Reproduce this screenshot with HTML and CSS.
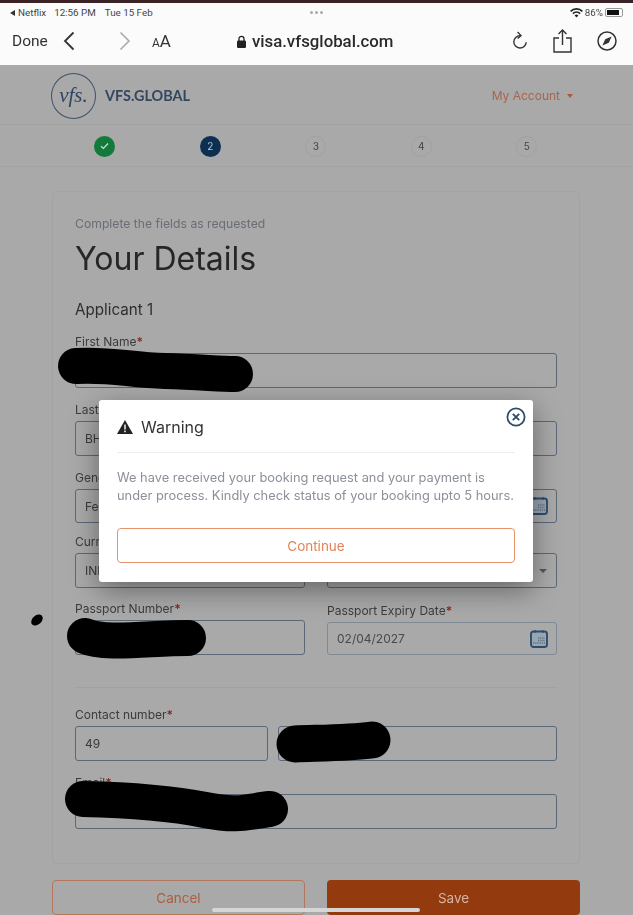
FILE: index.html
```html
<!DOCTYPE html>
<html lang="en">
<head>
  <meta charset="UTF-8">
  <meta name="viewport" content="width=device-width, initial-scale=1.0">
  <title>Your Details</title>
  <link rel="stylesheet" href="styles.css">
</head>
<body>
  <div class="screen">

    <!-- Browser chrome -->
    <div class="browser">
      <div class="status-bar">
        <div class="status-left">
          <span class="back-tri"></span><span>Netflix</span><span class="status-time">12:56 PM</span><span class="status-date">Tue 15 Feb</span>
        </div>
        <div class="status-dots"><i></i><i></i><i></i></div>
        <div class="status-right">
          <svg width="13" height="10" viewBox="0 0 13 10"><path d="M6.5 9.5 4.6 7.4a2.8 2.8 0 0 1 3.8 0zM3.5 6.2 2.3 5a6 6 0 0 1 8.4 0L9.5 6.2a4.4 4.4 0 0 0-6 0zM1.2 3.9 0 2.7a9.2 9.2 0 0 1 13 0l-1.2 1.2a7.6 7.6 0 0 0-10.6 0z" fill="#222"/></svg>
          <span>86%</span>
          <span class="battery"><span class="battery-fill"></span></span>
        </div>
      </div>
      <div class="nav-bar">
        <span class="done">Done</span>
        <svg class="chev" width="12" height="20" viewBox="0 0 12 20"><path d="M10.5 1.5 2 10l8.5 8.5" fill="none" stroke="#333" stroke-width="1.8"/></svg>
        <svg class="chev chev-next" width="12" height="20" viewBox="0 0 12 20"><path d="M1.5 1.5 10 10l-8.5 8.5" fill="none" stroke="#aaa" stroke-width="1.6"/></svg>
        <span class="text-size"><small>A</small>A</span>
        <div class="url">
          <svg width="9" height="13" viewBox="0 0 9 13"><path d="M2 6V3.8a2.5 2.5 0 0 1 5 0V6" fill="none" stroke="#222" stroke-width="1.3"/><rect x="0" y="5.5" width="9" height="7.5" rx="1.2" fill="#222"/></svg>
          <span>visa.vfsglobal.com</span>
        </div>
        <div class="nav-icons">
          <svg width="16" height="20" viewBox="0 0 16 20"><path d="M8 4.6a6.2 6.2 0 1 0 6.2 6.6" fill="none" stroke="#333" stroke-width="1.4"/><path d="M5.6 1 9 4.6 5.6 7.6" fill="none" stroke="#333" stroke-width="1.4"/></svg>
          <svg width="19" height="24" viewBox="0 0 19 24"><path d="M6 9H1v14h17V9h-5" fill="none" stroke="#333" stroke-width="1.4"/><path d="M9.5 16V1.5M5.5 5l4-4 4 4" fill="none" stroke="#333" stroke-width="1.4"/></svg>
          <svg width="20" height="20" viewBox="0 0 20 20"><circle cx="10" cy="10" r="9" fill="none" stroke="#333" stroke-width="1.5"/><path d="M14.6 5.4 11.8 11.8 5.4 14.6 8.2 8.2z" fill="#333"/></svg>
        </div>
      </div>
    </div>

    <!-- Page under the dialog -->
    <div class="page">
      <header class="site-header">
        <div class="logo">
          <span class="logo-mark">vfs.</span>
          <span class="logo-name">VFS.GLOBAL</span>
        </div>
        <div class="account">My Account <span class="caret"></span></div>
      </header>

      <div class="steps">
        <div class="step step-done">
          <svg width="9" height="8" viewBox="0 0 9 8"><path d="M1 4.2 3.4 6.5 8 1.5" fill="none" stroke="#cfe0d4" stroke-width="1.2"/></svg>
        </div>
        <div class="step step-current">2</div>
        <div class="step">3</div>
        <div class="step">4</div>
        <div class="step">5</div>
      </div>

      <main class="card">
        <p class="card-sub">Complete the fields as requested</p>
        <h1 class="card-title">Your Details</h1>
        <h2 class="applicant">Applicant 1</h2>

        <div class="form-row">
          <div class="field">
            <label>First Name<b>*</b></label>
            <div class="input"></div>
          </div>
        </div>
        <div class="form-row">
          <div class="field">
            <label>Last Name<b>*</b></label>
            <div class="input">BH</div>
          </div>
        </div>
        <div class="form-row cols row-gender">
          <div class="field">
            <label>Gender<b>*</b></label>
            <div class="input input-short">Fe</div>
          </div>
          <div class="field">
            <label></label>
            <div class="input input-short">
              <svg class="cal" width="18" height="18" viewBox="0 0 18 18"><use href="#calendar"/></svg>
            </div>
          </div>
        </div>
        <div class="form-row cols row-current">
          <div class="field">
            <label>Current<b>*</b></label>
            <div class="input">IND</div>
          </div>
          <div class="field">
            <label></label>
            <div class="input"><span class="select-caret"></span></div>
          </div>
        </div>
        <div class="form-row cols row-passport">
          <div class="field">
            <label>Passport Number<b>*</b></label>
            <div class="input"></div>
          </div>
          <div class="field field-low">
            <label>Passport Expiry Date<b>*</b></label>
            <div class="input input-light">02/04/2027
              <svg class="cal" width="18" height="18" viewBox="0 0 18 18"><use href="#calendar"/></svg>
            </div>
          </div>
        </div>

        <hr class="divider">

        <div class="form-row phone">
          <div class="field">
            <label>Contact number<b>*</b></label>
            <div class="input">49</div>
          </div>
          <div class="field">
            <label></label>
            <div class="input"></div>
          </div>
        </div>
        <div class="form-row">
          <div class="field">
            <label>Email<b>*</b></label>
            <div class="input"></div>
          </div>
        </div>
      </main>

      <div class="actions">
        <button class="btn btn-outline">Cancel</button>
        <button class="btn btn-fill">Save</button>
      </div>
    </div>

    <!-- Marker scribbles over the screenshot -->
    <svg class="scribbles" width="633" height="915" viewBox="0 0 633 915">
      <g fill="none" stroke="#000" stroke-linecap="round">
        <path stroke-width="36" d="M76 366C110 364 130 370 165 371S220 374 235 374"/>
        <path stroke-width="36" d="M85 636C105 645 150 638 188 638"/>
        <path stroke-width="37" d="M295 744C320 743 350 743 372 740"/>
        <path stroke-width="36" d="M83 799C130 800 170 803 205 810S250 811 270 809"/>
      </g>
      <ellipse cx="37" cy="620" rx="6.5" ry="4.5" transform="rotate(-40 37 620)" fill="#000"/>
    </svg>

    <div class="home-bar"></div>

    <!-- Warning dialog -->
    <div class="dialog">
      <svg class="dialog-close" width="20" height="20" viewBox="0 0 20 20"><circle cx="10" cy="10" r="8.6" fill="none" stroke="#2f4d6b" stroke-width="1.8"/><path d="M6.8 6.8l6.4 6.4M13.2 6.8l-6.4 6.4" stroke="#2f4d6b" stroke-width="1.9"/></svg>
      <div class="dialog-head">
        <svg width="16" height="14" viewBox="0 0 16 14"><path d="M8 0 16 14H0z" fill="#222"/><path d="M8 4.5v5M8 10.6v1.6" stroke="#fff" stroke-width="1.4"/></svg>
        <span>Warning</span>
      </div>
      <p class="dialog-text">We have received your booking request and your payment is under process. Kindly check status of your booking upto 5 hours.</p>
      <button class="btn btn-continue">Continue</button>
    </div>

    <svg width="0" height="0" class="defs">
      <symbol id="calendar" viewBox="0 0 18 18">
        <rect x="1" y="1.5" width="16" height="15.5" rx="2.5" fill="#98a5b2" stroke="#2f4d6b" stroke-width="1.9"/>
        <path d="M5 0v3M13 0v3" stroke="#2f4d6b" stroke-width="1.2"/>
        <path d="M8 8h7M8 10.5h7M3 13h12" stroke="#5e7083" stroke-width="1.3" stroke-dasharray="1.2 1"/>
      </symbol>
    </svg>
  </div>
</body>
</html>
```

FILE: styles.css
```css
/* Global */
html, body {
  margin: 0;
  padding: 0;
  height: 100%;
  overflow: hidden;
  background: #a9a9a9;
}

body {
  font-family: 'Inter', sans-serif;
  color: #333;
}

.screen {
  position: relative;
  width: 633px;
  height: 915px;
  overflow: hidden;
  filter: blur(0.35px);
}

.defs {
  position: absolute;
}

/* Browser chrome */
.browser {
  height: 62px;
  border-top: 3px solid #3a2226;
  background: #fbfbfb;
  font-family: 'Roboto', sans-serif;
}

.status-bar {
  display: grid;
  grid-template-columns: 1fr 30px 1fr;
  align-items: center;
  height: 19px;
  padding: 0 10px;
  font-size: 9.8px;
  color: #444;
}

.status-left {
  display: flex;
  align-items: center;
}

.back-tri {
  width: 0;
  height: 0;
  margin-right: 3px;
  border-top: 3px solid transparent;
  border-bottom: 3px solid transparent;
  border-right: 5px solid #333;
}

.status-time {
  margin-left: 8px;
}

.status-date {
  margin-left: 9px;
}

.status-dots {
  display: flex;
  justify-content: center;
  gap: 2px;
}

.status-dots i {
  width: 3px;
  height: 3px;
  border-radius: 50%;
  background: #aaa;
}

.status-right {
  display: flex;
  justify-content: flex-end;
  align-items: center;
  gap: 2px;
}

.battery {
  display: block;
  width: 18px;
  height: 9px;
  padding: 1px;
  box-sizing: border-box;
  border: 1px solid #999;
  border-radius: 2px;
}

.battery-fill {
  display: block;
  width: 85%;
  height: 100%;
  background: #111;
}

.nav-bar {
  position: relative;
  display: flex;
  align-items: center;
  height: 38px;
  padding-left: 12px;
}

.done {
  width: 51px;
  font-size: 15.5px;
  color: #333;
}

.chev-next {
  margin-left: 44px;
}

.text-size {
  margin-left: 21px;
  font-size: 17px;
  color: #333;
}

.text-size small {
  font-size: 12px;
}

.url {
  display: flex;
  align-items: center;
  gap: 6px;
  margin-left: 66px;
  font-size: 16.8px;
  font-weight: 500;
  color: #2a2a2a;
}

.nav-icons {
  display: flex;
  align-items: center;
  gap: 25px;
  margin-left: auto;
  padding-right: 16px;
}

/* Site header */
.site-header {
  display: flex;
  justify-content: space-between;
  align-items: center;
  height: 57px;
  padding: 2px 60px 0 51px;
  border-bottom: 1px solid #a2a2a2;
}

.logo {
  display: flex;
  align-items: center;
  gap: 9px;
}

.logo-mark {
  display: flex;
  justify-content: center;
  align-items: center;
  width: 43px;
  height: 44px;
  border: 1px solid #3d5169;
  border-radius: 50%;
  font-family: 'Liberation Serif', serif;
  font-style: italic;
  font-size: 21px;
  color: #2f4460;
}

.logo-name {
  font-family: 'Lato', sans-serif;
  font-weight: 700;
  font-size: 14.4px;
  color: #33475f;
}

.account {
  display: flex;
  align-items: center;
  gap: 7px;
  font-size: 12px;
  color: #a9654a;
}

.caret {
  width: 0;
  height: 0;
  border-top: 4px solid #ad5a36;
  border-left: 3.5px solid transparent;
  border-right: 3.5px solid transparent;
}

/* Steps */
.steps {
  display: grid;
  grid-template-columns: repeat(5, 105.5px);
  justify-items: center;
  align-items: center;
  height: 40px;
  padding: 1px 0 0 52px;
  border-bottom: 1px solid #a2a2a2;
}

.step {
  display: flex;
  justify-content: center;
  align-items: center;
  width: 21px;
  height: 21px;
  box-sizing: border-box;
  border: 1px solid #a0a0a0;
  border-radius: 50%;
  font-size: 10px;
  color: #444;
}

.step-done {
  border: 0;
  background: #147a3c;
}

.step-current {
  border: 0;
  background: #0d2f52;
  color: #b9c4d0;
}

/* Card */
.card {
  width: 528px;
  height: 673px;
  box-sizing: border-box;
  margin: 24px 0 16px 52px;
  padding: 24px 22px 0;
  border: 1px solid #a1a3a6;
  border-radius: 4px;
}

.card-sub {
  margin: 0;
  font-size: 12.2px;
  line-height: 16px;
  color: #686d77;
}

.card-title {
  margin: 7px 0 0;
  font-size: 32px;
  line-height: 40px;
  font-weight: 400;
  color: #262626;
}

.applicant {
  margin: 22px 0 14px;
  font-size: 15.2px;
  line-height: 18px;
  font-weight: 400;
  color: #2e2e2e;
}

.form-row {
  margin-bottom: 13px;
}

.cols {
  display: grid;
  grid-template-columns: 230px 230px;
  column-gap: 22px;
}

.phone {
  display: grid;
  grid-template-columns: 193px 1fr;
  column-gap: 10px;
}

.row-gender {
  margin-bottom: 10px;
}

.row-current {
  margin-bottom: 12px;
}

.row-passport {
  margin-bottom: 0;
}

.field label {
  display: block;
  height: 17px;
  margin-bottom: 3px;
  font-size: 12px;
  line-height: 17px;
  color: #3c3c3c;
}

.field label b {
  font-weight: 600;
  color: #8c2727;
}

.field-low {
  padding-top: 2px;
}

.input {
  display: flex;
  justify-content: space-between;
  align-items: center;
  height: 35px;
  box-sizing: border-box;
  padding: 0 9px;
  border: 1px solid #5a6878;
  border-radius: 3px;
  font-size: 12px;
  color: #3a3a3a;
}

.input-short {
  height: 34px;
}

.input-light {
  height: 33px;
  border-color: #7f8a97;
  color: #4a4a4a;
}

.cal {
  margin-left: auto;
  margin-right: -1px;
}

.select-caret {
  margin-left: auto;
  width: 0;
  height: 0;
  border-top: 4px solid #555;
  border-left: 4px solid transparent;
  border-right: 4px solid transparent;
}

.divider {
  height: 1px;
  margin: 32px 0 18px;
  border: 0;
  background: #a2a2a2;
}

/* Buttons */
.actions {
  display: grid;
  grid-template-columns: 253px 253px;
  column-gap: 22px;
  margin-left: 52px;
}

.btn {
  height: 35px;
  border-radius: 4px;
  font-family: inherit;
  font-size: 13.5px;
}

.btn-outline {
  border: 1px solid #b3775e;
  background: transparent;
  color: #a9603f;
}

.btn-fill {
  border: 0;
  background: #933a0e;
  color: #d4b5a3;
}

.home-bar {
  position: absolute;
  left: 212px;
  bottom: 3px;
  width: 208px;
  height: 4px;
  border-radius: 2px;
  background: #d6d6d6;
}

.scribbles {
  position: absolute;
  top: 0;
  left: 0;
}

/* Dialog */
.dialog {
  position: absolute;
  top: 400px;
  left: 99px;
  width: 434px;
  height: 182px;
  box-sizing: border-box;
  padding: 0 18px;
  border-radius: 3px;
  background: #fff;
  box-shadow: 0 8px 28px rgba(0, 0, 0, 0.4);
}

.dialog-close {
  position: absolute;
  top: 7px;
  right: 7px;
}

.dialog-head {
  display: flex;
  align-items: center;
  gap: 8px;
  height: 50px;
  padding-top: 2px;
  border-bottom: 1px solid #eeeeee;
  font-size: 16px;
  color: #333;
}

.dialog-text {
  margin: 16px 0 23px;
  font-size: 12.85px;
  line-height: 18px;
  color: #8b9099;
}

.btn-continue {
  display: block;
  width: 100%;
  border: 1px solid #e8926a;
  background: #fff;
  color: #e0855a;
}
```
